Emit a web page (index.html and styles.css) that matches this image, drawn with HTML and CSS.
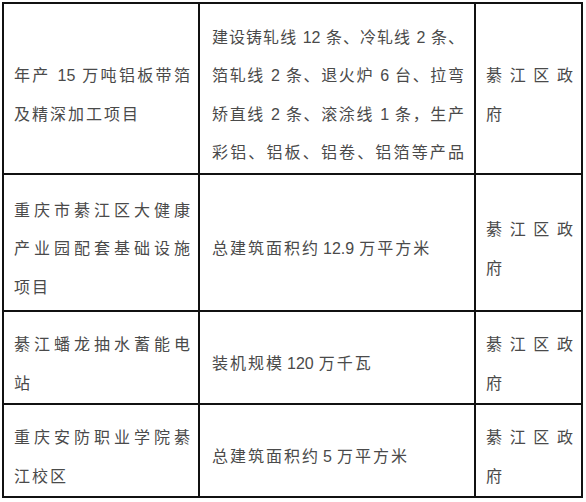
FILE: index.html
```html
<!DOCTYPE html>
<html lang="zh-CN">
<head>
<meta charset="utf-8">
<title>项目表</title>
<link rel="stylesheet" href="styles.css">
</head>
<body>
<table class="grid">
  <tr class="r1">
    <td class="c1"><div class="j">年产 15 万吨铝板带箔</div><div class="p">及精深加工项目</div></td>
    <td class="c2"><div class="j">建设铸轧线 12 条、冷轧线 2 条、</div><div class="j">箔轧线 2 条、退火炉 6 台、拉弯</div><div class="j">矫直线 2 条、滚涂线 1 条，生产</div><div class="j">彩铝、铝板、铝卷、铝箔等产品</div></td>
    <td class="c3"><div class="j">綦江区政</div><div class="p">府</div></td>
  </tr>
  <tr class="r2">
    <td class="c1"><div class="j">重庆市綦江区大健康</div><div class="j">产业园配套基础设施</div><div class="p">项目</div></td>
    <td class="c2"><div class="p">总建筑面积约<span class="n">12.9</span>万平方米</div></td>
    <td class="c3"><div class="j">綦江区政</div><div class="p">府</div></td>
  </tr>
  <tr class="r3">
    <td class="c1"><div class="j">綦江蟠龙抽水蓄能电</div><div class="p">站</div></td>
    <td class="c2"><div class="p">装机规模<span class="n">120</span>万千瓦</div></td>
    <td class="c3"><div class="j">綦江区政</div><div class="p">府</div></td>
  </tr>
  <tr class="r4">
    <td class="c1"><div class="j">重庆安防职业学院綦</div><div class="p">江校区</div></td>
    <td class="c2"><div class="p">总建筑面积约<span class="n">5</span>万平方米</div></td>
    <td class="c3"><div class="j">綦江区政</div><div class="p">府</div></td>
  </tr>
</table>
</body>
</html>
```
FILE: styles.css
```css
html, body {
  margin: 0;
  padding: 0;
  background: #ffffff;
}
body {
  padding: 2px 0 0 2px;
  font-family: "Liberation Sans", "Noto Sans CJK SC", sans-serif;
  font-size: 16px;
  color: #4a4a4a;
}
.grid {
  width: 581px;
  table-layout: fixed;
  border-collapse: separate;
  border-spacing: 0;
  border-top: 2px solid #111;
  border-left: 2px solid #111;
}
.grid td {
  box-sizing: border-box;
  border-right: 2px solid #111;
  border-bottom: 2px solid #111;
  vertical-align: middle;
  padding-top: 14px;
  padding-bottom: 0;
  line-height: 38.5px;
}
.c1 { width: 196px; padding-left: 10px; padding-right: 8px; }
.c2 { width: 276px; padding-left: 12px; padding-right: 10px; }
.c3 { width: 107px; padding-left: 10px; padding-right: 8px; }
.r1 td { height: 171px; }
.r2 td { height: 137px; }
.r3 td { height: 93px; }
.r4 td { height: 93px; }
.j {
  text-align: justify;
  text-align-last: justify;
  white-space: nowrap;
}
.p {
  letter-spacing: 2px;
  white-space: nowrap;
}
.n {
  letter-spacing: 0;
  margin: 0 5px 0 3px;
}
```
